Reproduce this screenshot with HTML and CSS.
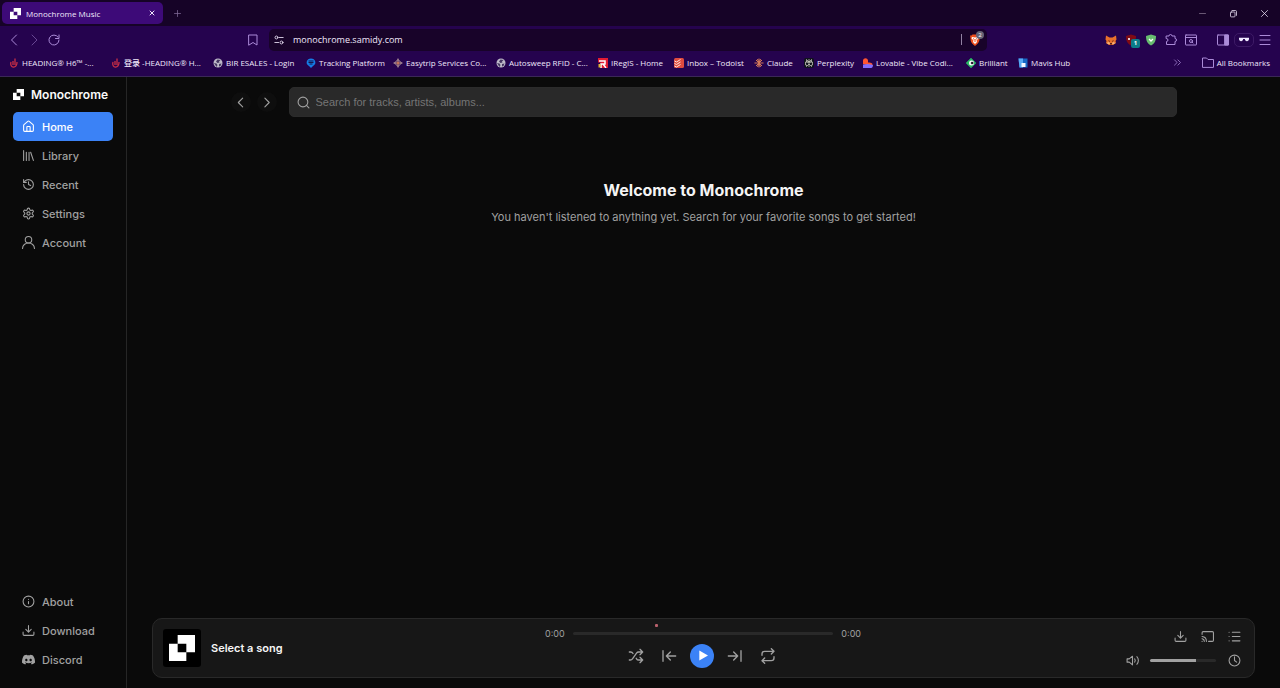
FILE: index.html
```html
<!DOCTYPE html>
<html lang="en">
<head>
  <meta charset="UTF-8">
  <meta name="viewport" content="width=device-width, initial-scale=1.0">
  <title>Monochrome Music</title>
  <link rel="stylesheet" href="styles.css">
</head>
<body>
  <header class="browser">
    <div class="tab-strip">
      <div class="tab">
        <svg class="logo" viewBox="0 0 24 24"><path d="M8 0h16v16h-8V8H8z M0 8h8v8h8v8H0z"/></svg>
        <span class="tab-title">Monochrome Music</span>
        <button class="bare" aria-label="Close tab"><svg class="icon tiny" viewBox="0 0 24 24"><path d="M4 4l16 16M20 4L4 20"/></svg></button>
      </div>
      <button class="bare new-tab" aria-label="New tab"><svg class="icon small" viewBox="0 0 24 24"><path d="M12 4v16M4 12h16"/></svg></button>
      <div class="window-buttons">
        <button class="bare dim" aria-label="Minimize"><svg class="icon small" viewBox="0 0 24 24"><path d="M4 12h16"/></svg></button>
        <button class="bare" aria-label="Restore"><svg class="icon small" viewBox="0 0 24 24"><rect x="4" y="8" width="12" height="13" rx="2"/><path d="M8 4h9a3 3 0 0 1 3 3v10"/></svg></button>
        <button class="bare" aria-label="Close"><svg class="icon small" viewBox="0 0 24 24"><path d="M4 4l16 16M20 4L4 20"/></svg></button>
      </div>
    </div>

    <div class="toolbar">
      <div class="toolbar-nav">
        <button class="bare" aria-label="Back"><svg class="icon" viewBox="0 0 24 24"><path d="M17 2L7 12l10 10"/></svg></button>
        <button class="bare faint" aria-label="Forward"><svg class="icon" viewBox="0 0 24 24"><path d="M8 2l10 10L8 22"/></svg></button>
        <button class="bare" aria-label="Reload"><svg class="icon" viewBox="0 0 24 24"><path d="M20 6a10 10 0 1 0 2 6M22 2v7h-7"/></svg></button>
        <button class="bare save-page" aria-label="Bookmark this page"><svg class="icon" viewBox="0 0 24 24"><path d="M4 2h16v20l-8-5-8 5z"/></svg></button>
      </div>
      <div class="address">
        <svg class="icon small" viewBox="0 0 24 24"><circle cx="6" cy="6" r="3.500"/><path d="M13 6h9M2 18h9"/><circle cx="18" cy="18" r="3.500"/></svg>
        <input type="text" value="monochrome.samidy.com" aria-label="Address">
        <span class="divider"></span>
        <button class="bare shields" aria-label="Shields">
          <svg class="glyph" viewBox="0 0 24 24"><path fill="#f0501e" d="M7 1h10l2 2 3 0-1 6c0 8-4 11-9 15C7 20 3 17 3 9L2 3h3z"/><path fill="#fff" d="M6 6l6 1 6-1 1 3-4 4 1 3-4 4-4-4 1-3-4-4z"/><path stroke="#f0501e" stroke-width="2" d="M8 9l3 2M16 9l-3 2M12 11v5"/></svg>
          <span class="count">2</span>
        </button>
      </div>
      <div class="extensions">
        <button class="bare" aria-label="Wallet"><svg class="glyph" viewBox="0 0 24 24"><path fill="#e8712b" d="M2 3l7 4h6l7-4 1 8-2 3 1 4-6 4H8l-6-4 1-4-2-3z"/><path fill="#5c2418" d="M6 12l4 2-1 2zM18 12l-4 2 1 2zM10 18h4v3h-4z"/><path fill="#f6b57e" d="M3 18l5-2 2 3-2 2zM21 18l-5-2-2 3 2 2z"/></svg></button>
        <button class="bare blocker" aria-label="Blocker"><svg class="glyph" viewBox="0 0 24 24"><path fill="#800b14" d="M12 1l10 3c0 10-3 15-10 19C5 19 2 14 2 4z"/><path fill="#e4c7ce" d="M6 8h4v4H6z"/></svg><span class="count">1</span></button>
        <button class="bare" aria-label="Protection"><svg class="glyph" viewBox="0 0 24 24"><path fill="#68bd70" d="M12 1l10 3c0 10-3 15-10 19C5 19 2 14 2 4z"/><path fill="none" stroke="#fff" stroke-width="2.500" d="M8 10l4 4 4-4"/></svg></button>
        <button class="bare" aria-label="Extensions"><svg class="icon" viewBox="0 0 24 24"><path d="M3 4h5a3 3 0 1 1 6 0h6v5a3 3 0 1 1 0 6v6H3v-6a3 3 0 0 0 0-6z"/></svg></button>
        <button class="bare" aria-label="Page search"><svg class="icon" viewBox="0 0 24 24"><rect x="1" y="2" width="22" height="20" rx="1"/><path d="M1 7h22M14 16l2 2"/><circle cx="12" cy="14" r="3"/></svg></button>
        <button class="bare side-panel" aria-label="Side panel"><svg class="icon" viewBox="0 0 24 24"><rect x="1" y="2" width="22" height="20" rx="1"/><path class="filled" d="M16 2h7v20h-7z"/></svg></button>
        <button class="bare glasses" aria-label="Profile"><svg viewBox="0 0 24 12"><path fill="#f0e9ff" d="M0 2h24v3c0 3-2 5-5 5s-5-2-5-5h-4c0 3-2 5-5 5s-5-2-5-5z"/></svg></button>
        <button class="bare" aria-label="Menu"><svg class="icon" viewBox="0 0 24 24"><path d="M2 3h20M2 12h20M2 21h20"/></svg></button>
      </div>
    </div>

    <nav class="bookmarks">
      <div class="bookmark-list">
        <a href="#"><svg class="favicon" viewBox="0 0 20 20"><path fill="none" stroke="#cf3045" stroke-width="2.500" d="M4 8c-4 13 13 14 12 0M8 6v8M12 1v13"/></svg>HEADING® H6™ -...</a>
        <a href="#"><svg class="favicon" viewBox="0 0 20 20"><path fill="none" stroke="#cf3045" stroke-width="2.500" d="M4 8c-4 13 13 14 12 0M8 6v8M12 1v13"/></svg>登录 -HEADING® H...</a>
        <a href="#"><svg class="favicon" viewBox="0 0 20 20"><circle cx="10" cy="10" r="9" fill="#bdb9c8"/><path fill="#453761" d="M9 3l6 1-3 3 1 2-4 1-3-3zM2 10l5 1 2 3-2 4zM12 12l5-1-2 5-3 1z"/></svg>BIR ESALES - Login</a>
        <a href="#"><svg class="favicon" viewBox="0 0 20 20"><path fill="#147ce5" d="M10 1a9 8 0 0 1 4 15l-4 4-4-4A9 8 0 0 1 10 1z"/><path fill="none" stroke="#16154f" stroke-width="2" d="M5 6h10M5 9h10M7 12h6"/></svg>Tracking Platform</a>
        <a href="#"><svg class="favicon" viewBox="0 0 20 20"><path fill="none" stroke="#b99b9c" stroke-width="2" d="M10 1v18M1 10h18M10 3L3 10l7 7 7-7z"/><circle cx="10" cy="10" r="3" fill="#c37355"/></svg>Easytrip Services Co...</a>
        <a href="#"><svg class="favicon" viewBox="0 0 20 20"><circle cx="10" cy="10" r="9" fill="#bdb9c8"/><path fill="#453761" d="M9 3l6 1-3 3 1 2-4 1-3-3zM2 10l5 1 2 3-2 4zM12 12l5-1-2 5-3 1z"/></svg>Autosweep RFID - C...</a>
        <a href="#"><svg class="favicon" viewBox="0 0 20 20"><path fill="#e31b32" d="M0 0h20v20H5V9H0z"/><path fill="none" stroke="#fff" stroke-width="3" d="M2 6h12v6H6v8M10 12l6 8"/><path fill="#e6b632" d="M1 12h4v7H1z"/></svg>IRegIS - Home</a>
        <a href="#"><svg class="favicon" viewBox="0 0 20 20"><rect width="20" height="20" rx="3" fill="#df4b3f"/><path fill="none" stroke="#ffe6df" stroke-width="2" d="M1 6l4 2 8-5M1 11l4 2 8-5M1 16l4 2 8-5"/></svg>Inbox – Todoist</a>
        <a href="#"><svg class="favicon" viewBox="0 0 20 20"><path stroke="#d57959" stroke-width="2" d="M10 1v18M1 10h18M4 4l12 12M16 4L4 16M7 2l6 16M13 2L7 18"/></svg>Claude</a>
        <a href="#"><svg class="favicon" viewBox="0 0 20 20"><rect width="20" height="20" rx="4" fill="#10131c"/><path fill="none" stroke="#c9cabd" stroke-width="1.500" d="M10 2v16M5 3l5 5 5-5v5H5zM3 8h14v6h-2v3l-5-5-5 5v-3H3z"/></svg>Perplexity</a>
        <a href="#"><svg class="favicon" viewBox="0 0 20 20"><path fill="#ff5530" d="M0 5c1-6 9-6 10 0v4c8 0 9 2 9 5L8 14 0 12z"/><path fill="#806dff" d="M0 13l10-1 10 2c0 3-1 6-4 6H0z"/></svg>Lovable - Vibe Codi...</a>
        <a href="#"><svg class="favicon" viewBox="0 0 20 20"><path fill="#29b764" d="M10 0l10 10-10 10L0 10z" stroke="#29b764" stroke-linejoin="round"/><circle cx="11" cy="10" r="5" fill="#fff"/><path d="M12 7l4 3-4 3-3-3z" fill="#171222"/></svg>Brilliant</a>
        <a href="#"><svg class="favicon" viewBox="0 0 20 20"><path fill="#1768c5" d="M1 1h18v18H3z"/><path fill="#58a9f3" d="M1 1h9v18H3z"/><path fill="#f4f8ff" d="M7 10h8v8H7z"/></svg>Mavis Hub</a>
      </div>
      <button class="bare more" aria-label="More bookmarks"><svg class="icon small" viewBox="0 0 24 24"><path d="M4 5l7 7-7 7M13 5l7 7-7 7"/></svg></button>
      <a class="all-bookmarks" href="#"><svg class="icon" viewBox="0 0 24 24"><path d="M1 21V3h8l3 3h11v15z"/></svg>All Bookmarks</a>
    </nav>
  </header>

  <div class="app">
    <aside class="sidebar">
      <a class="brand" href="#"><svg class="logo" viewBox="0 0 24 24"><path d="M8 0h16v16h-8V8H8z M0 8h8v8h8v8H0z"/></svg>Monochrome</a>
      <nav class="menu">
        <a class="active" href="#"><svg class="icon" viewBox="0 0 24 24"><path d="M15 21v-8a1 1 0 0 0-1-1h-4a1 1 0 0 0-1 1v8"/><path d="M3 10a2 2 0 0 1 .7-1.500l7-6a2 2 0 0 1 2.600 0l7 6A2 2 0 0 1 21 10v9a2 2 0 0 1-2 2H5a2 2 0 0 1-2-2z"/></svg>Home</a>
        <a href="#"><svg class="icon" viewBox="0 0 24 24"><path d="M16 6l5 15M13 6v15M8 6v15M3 3v18"/></svg>Library</a>
        <a href="#"><svg class="icon" viewBox="0 0 24 24"><path d="M3 12a9 9 0 1 0 9-9 9.750 9.750 0 0 0-6.740 2.740L3 8"/><path d="M3 3v5h5M12 7v5l4 2"/></svg>Recent</a>
        <a href="#"><svg class="icon" viewBox="0 0 24 24"><path d="M12.220 2h-.44a2 2 0 0 0-2 2v.18a2 2 0 0 1-1 1.730l-.43.25a2 2 0 0 1-2 0l-.15-.08a2 2 0 0 0-2.730.73l-.22.38a2 2 0 0 0 .73 2.730l.15.1a2 2 0 0 1 1 1.720v.51a2 2 0 0 1-1 1.740l-.15.09a2 2 0 0 0-.73 2.730l.22.38a2 2 0 0 0 2.730.73l.15-.08a2 2 0 0 1 2 0l.43.25a2 2 0 0 1 1 1.730V20a2 2 0 0 0 2 2h.44a2 2 0 0 0 2-2v-.18a2 2 0 0 1 1-1.730l.43-.25a2 2 0 0 1 2 0l.15.08a2 2 0 0 0 2.730-.73l.22-.39a2 2 0 0 0-.73-2.730l-.15-.08a2 2 0 0 1-1-1.740v-.5a2 2 0 0 1 1-1.740l.15-.09a2 2 0 0 0 .73-2.730l-.22-.38a2 2 0 0 0-2.730-.73l-.15.08a2 2 0 0 1-2 0l-.43-.25a2 2 0 0 1-1-1.730V4a2 2 0 0 0-2-2z"/><circle cx="12" cy="12" r="3"/></svg>Settings</a>
        <a href="#"><svg class="icon" viewBox="0 0 24 24"><circle cx="12" cy="7" r="6"/><path d="M1 23c0-6 5-10 11-10s11 4 11 10"/></svg>Account</a>
      </nav>
      <nav class="menu menu-bottom">
        <a href="#"><svg class="icon" viewBox="0 0 24 24"><circle cx="12" cy="12" r="10"/><path d="M12 16v-4M12 8h.01"/></svg>About</a>
        <a href="#"><svg class="icon" viewBox="0 0 24 24"><path d="M22 15v4a2 2 0 0 1-2 2H4a2 2 0 0 1-2-2v-4M7 10l5 5 5-5M12 15V3"/></svg>Download</a>
        <a href="#"><svg class="discord" viewBox="0 0 24 24"><path fill="currentColor" fill-rule="evenodd" d="M20.300 4.400A20 20 0 0 0 15.400 3l-.7 1.300a18 18 0 0 0-5.400 0L8.600 3a20 20 0 0 0-5 1.400C.5 9-.3 13.600.1 18.100A20 20 0 0 0 6.100 21l1.300-2-2-1 .5-.4c4 1.800 8.200 1.800 12.200 0l.5.4-2 1 1.300 2a20 20 0 0 0 6-2.900c.5-5.200-.8-9.700-3.600-13.700zM8 15.300c-1.200 0-2.100-1-2.100-2.400S6.800 10.500 8 10.500s2.200 1.100 2.200 2.400S9.200 15.300 8 15.300zm8 0c-1.200 0-2.200-1-2.200-2.400s1-2.400 2.200-2.400 2.200 1.100 2.200 2.400-1 2.400-2.200 2.400z"/></svg>Discord</a>
      </nav>
    </aside>

    <main class="content">
      <div class="search-row">
        <button class="round" aria-label="Go back"><svg class="icon" viewBox="0 0 24 24"><path d="M16 20l-8-8 8-8"/></svg></button>
        <button class="round" aria-label="Go forward"><svg class="icon" viewBox="0 0 24 24"><path d="M9 20l8-8-8-8"/></svg></button>
        <label class="search">
          <svg class="icon" viewBox="0 0 24 24"><circle cx="11" cy="11" r="9"/><path d="M22 22l-4.500-4.500"/></svg>
          <input type="search" placeholder="Search for tracks, artists, albums..." aria-label="Search">
        </label>
      </div>

      <section class="welcome">
        <h1>Welcome to Monochrome</h1>
        <p>You haven't listened to anything yet. Search for your favorite songs to get started!</p>
      </section>

      <footer class="player">
        <div class="track">
          <div class="cover"><svg class="logo" viewBox="0 0 24 24"><path d="M8 0h16v16h-8V8H8z M0 8h8v8h8v8H0z"/></svg></div>
          <span>Select a song</span>
        </div>

        <div class="playback">
          <span class="marker"></span>
          <div class="progress">
            <span>0:00</span>
            <input class="seek" type="range" min="0" max="100" value="0" aria-label="Seek">
            <span>0:00</span>
          </div>
          <div class="controls">
            <button class="bare" aria-label="Shuffle"><svg class="icon" viewBox="0 0 24 24"><path d="M2 18h1.400c1.300 0 2.500-.6 3.300-1.700l6.100-8.600c.7-1.100 2-1.700 3.300-1.700H22M18 2l4 4-4 4M2 6h1.900c1.500 0 2.900.9 3.600 2.200M22 18h-5.900c-1.300 0-2.600-.7-3.300-1.800l-.5-.8M18 14l4 4-4 4"/></svg></button>
            <button class="bare" aria-label="Previous"><svg class="icon" viewBox="0 0 24 24"><path d="M3 4v16M22 12H8M14 6l-6 6 6 6"/></svg></button>
            <button class="bare play" aria-label="Play"><svg viewBox="0 0 24 24"><path fill="#fff" d="M5 1l19 11L5 23z"/></svg></button>
            <button class="bare" aria-label="Next"><svg class="icon" viewBox="0 0 24 24"><path d="M21 4v16M2 12h14M10 6l6 6-6 6"/></svg></button>
            <button class="bare" aria-label="Repeat"><svg class="icon" viewBox="0 0 24 24"><path d="M17 1l4 4-4 4M3 11V9a4 4 0 0 1 4-4h14M7 23l-4-4 4-4M21 13v2a4 4 0 0 1-4 4H3"/></svg></button>
          </div>
        </div>

        <div class="extras">
          <div class="extras-row">
            <button class="bare" aria-label="Download track"><svg class="icon" viewBox="0 0 24 24"><path d="M22 15v4a2 2 0 0 1-2 2H4a2 2 0 0 1-2-2v-4M7 10l5 5 5-5M12 15V3"/></svg></button>
            <button class="bare" aria-label="Cast"><svg class="icon" viewBox="0 0 24 24"><path d="M2 8V5a2 2 0 0 1 2-2h17a2 2 0 0 1 2 2v14a2 2 0 0 1-2 2h-7M2 12a9 9 0 0 1 8 9M2 16a5 5 0 0 1 4 5M2 21h.01"/></svg></button>
            <button class="bare" aria-label="Queue"><svg class="icon" viewBox="0 0 24 24"><path d="M8 4h14M8 12h14M8 20h14M2 4h.01M2 12h.01M2 20h.01"/></svg></button>
          </div>
          <div class="extras-row">
            <button class="bare" aria-label="Mute"><svg class="icon" viewBox="0 0 24 24"><path d="M12 4L6 9H2v6h4l6 5zM16 9a5 5 0 0 1 0 6M20 5a10 10 0 0 1 0 14"/></svg></button>
            <input class="volume" type="range" min="0" max="100" value="70" aria-label="Volume">
            <button class="bare" aria-label="Sleep timer"><svg class="icon" viewBox="0 0 24 24"><circle cx="12" cy="12" r="10"/><path d="M12 5v7l4 3"/></svg></button>
          </div>
        </div>
      </footer>
    </main>
  </div>
</body>
</html>
```
FILE: styles.css
```css
* {
  box-sizing: border-box;
}

body {
  display: flex;
  flex-direction: column;
  min-height: 100vh;
  margin: 0;
  background: #0a0a0a;
  color: #a1a1a1;
  font-family: Inter, sans-serif;
  font-size: 11px;
}

a {
  color: inherit;
  text-decoration: none;
}

input {
  min-width: 0;
  margin: 0;
  padding: 0;
  border: none;
  outline: none;
  background: none;
  color: inherit;
}

svg {
  display: block;
  flex-shrink: 0;
}

.icon {
  width: 13px;
  height: 13px;
  fill: none;
  stroke: currentColor;
  stroke-width: 2;
  stroke-linecap: round;
  stroke-linejoin: round;
}

.icon.small {
  width: 9px;
  height: 9px;
}

.icon.tiny {
  width: 6px;
  height: 6px;
  stroke-width: 4;
}

.icon .filled {
  fill: currentColor;
}

.logo {
  width: 11px;
  height: 11px;
  fill: #fff;
}

.bare {
  display: flex;
  align-items: center;
  justify-content: center;
  padding: 0;
  border: none;
  background: none;
  color: inherit;
  cursor: pointer;
}

/* Browser bars */
.browser {
  background: #25034e;
  border-bottom: 1px solid #3a2856;
  color: #f0e8fb;
  font-family: "Open Sans", "Noto Sans CJK SC", sans-serif;
  font-size: 8px;
  font-weight: 500;
}

.tab-strip {
  display: flex;
  align-items: center;
  height: 26px;
  padding: 0 11px 0 2px;
  background: #160327;
}

.tab {
  display: flex;
  align-items: center;
  gap: 5px;
  width: 161px;
  height: 22px;
  padding: 0 8px;
  border-radius: 5px;
  background: #3d0a78;
}

.tab-title {
  flex: 1;
}

.new-tab {
  margin-left: 10px;
  color: #806b98;
}

.window-buttons {
  display: flex;
  gap: 22px;
  margin-left: auto;
}

.dim {
  color: #85758f;
}

.faint {
  opacity: 0.5;
}

.toolbar {
  display: grid;
  grid-template-columns: 269px 1fr 293px;
  align-items: center;
  height: 27px;
  color: #ab8bd8;
}

.toolbar .icon {
  width: 12px;
  height: 12px;
}

.toolbar-nav {
  display: flex;
  gap: 8px;
  padding: 0 10px 0 8px;
}

.save-page {
  margin-left: auto;
}

.address {
  display: flex;
  align-items: center;
  gap: 9px;
  height: 22px;
  padding: 0 3px 0 5px;
  border-radius: 5px;
  background: #180329;
  color: #f0e8fb;
}

.toolbar .address .icon {
  width: 10px;
  height: 10px;
}

.address input {
  flex: 1;
  font: 500 9px "Open Sans", sans-serif;
}

.divider {
  width: 1px;
  height: 11px;
  background: #9182a2;
}

.glyph {
  width: 12px;
  height: 12px;
}

.shields,
.blocker {
  position: relative;
}

.shields {
  margin: 0 3px 0 -2px;
}

.count {
  position: absolute;
  top: -3px;
  right: -3px;
  width: 8px;
  height: 8px;
  border-radius: 4px;
  background: #666475;
  color: #fff;
  font: 6px/8px "Open Sans", sans-serif;
}

.blocker .count {
  top: 5px;
  width: 9px;
  height: 9px;
  border-radius: 2px;
  background: #0c7d88;
  font-weight: 700;
}

.extensions {
  display: flex;
  align-items: center;
  justify-content: flex-end;
  gap: 8px;
  padding-right: 9px;
}

.side-panel {
  margin-left: 12px;
}

.glasses {
  width: 20px;
  height: 14px;
  margin: 0 -3px;
  border: 1px solid #3d1a66;
  border-radius: 5px;
}

.glasses svg {
  width: 10px;
  height: 5px;
}

.bookmarks {
  display: flex;
  align-items: center;
  height: 23px;
  padding: 0 10px 4px 9px;
}

.bookmark-list {
  display: grid;
  grid-template-columns: 102px 102px 93px 87px 103px 102px 76px 80px 50px 59px 103px 52px 54px;
  flex: 1;
}

.bookmarks a {
  display: flex;
  align-items: center;
  gap: 3px;
  line-height: 12px;
  white-space: nowrap;
}

.favicon {
  width: 10px;
  height: 10px;
}

.more {
  margin-right: 20px;
  color: #ab8bd8;
}

.all-bookmarks .icon {
  width: 12px;
  color: #ab8bd8;
}

/* App */
.app {
  display: flex;
  flex: 1;
}

.sidebar {
  display: flex;
  flex-direction: column;
  width: 127px;
  padding: 8px 13px 14px;
  border-right: 1px solid #262626;
}

.brand {
  display: flex;
  align-items: center;
  gap: 7px;
  height: 18px;
  margin-bottom: 9px;
  color: #fafafa;
  font-size: 12px;
  font-weight: 600;
}

.menu a {
  display: flex;
  align-items: center;
  gap: 7px;
  height: 29px;
  padding: 0 9px;
  border-radius: 5px;
  font-weight: 500;
}

.menu .active {
  background: #3b82f6;
  color: #fff;
}

.menu-bottom {
  margin-top: auto;
}

.discord {
  width: 13px;
  height: 13px;
}

.content {
  display: flex;
  flex: 1;
  flex-direction: column;
  padding: 10px 25px;
}

.search-row {
  display: flex;
  align-items: center;
  gap: 6px;
  width: 100%;
  max-width: 946px;
  margin: 0 auto;
}

.round {
  display: flex;
  align-items: center;
  justify-content: center;
  width: 20px;
  height: 20px;
  padding: 0;
  border: none;
  border-radius: 50%;
  background: #0e0e0e;
  color: #a1a1a1;
}

.search {
  display: flex;
  flex: 1;
  align-items: center;
  gap: 6px;
  height: 30px;
  margin-left: 6px;
  padding: 0 7px;
  border: 1px solid #2b2b2b;
  border-radius: 5px;
  background: #292929;
}

.search input {
  flex: 1;
  font: 11px "Liberation Sans", sans-serif;
}

.search input::placeholder {
  color: #757575;
}

.welcome {
  margin-top: 62px;
  text-align: center;
}

.welcome h1 {
  margin: 0 0 8px;
  color: #f5f5f5;
  font-size: 16px;
  line-height: 22px;
}

.welcome p {
  margin: 0;
  line-height: 16px;
}

/* Player */
.player {
  display: grid;
  grid-template-columns: 1fr 316px 1fr;
  align-items: center;
  height: 60px;
  margin-top: auto;
  padding: 0 13px 0 10px;
  border: 1px solid #292929;
  border-radius: 10px;
  background: #171717;
}

.track {
  display: flex;
  align-items: center;
  gap: 10px;
  color: #f5f5f5;
  font-weight: 600;
}

.cover {
  display: grid;
  place-items: center;
  width: 38px;
  height: 38px;
  border-radius: 3px;
  background: #000;
}

.cover .logo {
  width: 26px;
  height: 26px;
}

.playback {
  position: relative;
  padding-bottom: 1px;
}

.marker {
  position: absolute;
  top: -4px;
  left: 35%;
  width: 3px;
  height: 3px;
  border-radius: 1px;
  background: #b9616c;
}

.progress {
  display: flex;
  align-items: center;
  gap: 8px;
  height: 12px;
  margin: 0 -1px 4px 1px;
  font-size: 9px;
}

input[type="range"] {
  height: 3px;
  border-radius: 2px;
  background: #292929;
  appearance: none;
}

input[type="range"]::-webkit-slider-thumb {
  width: 0;
  height: 0;
  appearance: none;
}

.seek {
  flex: 1;
}

.controls {
  display: flex;
  justify-content: center;
  gap: 9px;
}

.controls .bare {
  width: 24px;
  height: 24px;
}

.controls .icon {
  width: 16px;
  height: 16px;
}

.controls .play {
  border-radius: 50%;
  background: #3b82f6;
}

.controls .play svg {
  width: 11px;
  height: 11px;
}

.extras {
  display: grid;
  gap: 11px;
}

.extras-row {
  display: flex;
  align-items: center;
  justify-content: flex-end;
  gap: 14px;
}

input.volume {
  width: 66px;
  margin: 0 -2px 0 -3px;
  background: linear-gradient(to right, #a1a1a1 70%, #292929 70%);
}
```
